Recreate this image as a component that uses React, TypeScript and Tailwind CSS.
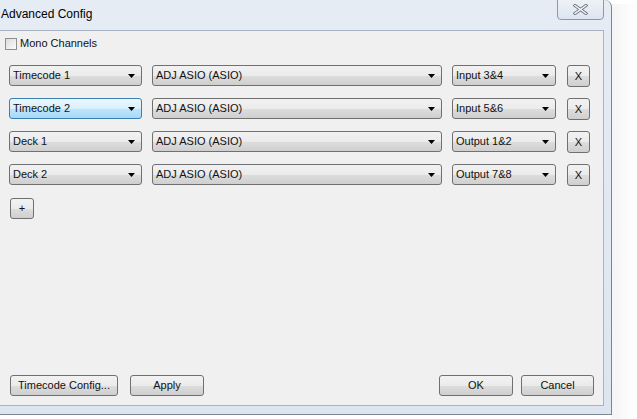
import React from "react";

const font = { fontFamily: '"Liberation Sans", Arial, sans-serif' };

function Arrow() {
  return (
    <svg width="7" height="4" viewBox="0 0 7 4" className="shrink-0">
      <path d="M0 0 H7 L3.5 4 Z" fill="#000" />
    </svg>
  );
}

function Combo({ label, w, hot }: { label: string; w: string; hot?: boolean }) {
  return (
    <div
      className={`${w} h-[21px] shrink-0 rounded-[3px] border flex items-center pl-[3px] pr-[6px] ${
        hot
          ? "border-[#3c7fb1] bg-[linear-gradient(#eaf6fd_0%,#d9f0fc_50%,#bee6fd_51%,#a7d9f5_100%)]"
          : "border-[#707070] bg-[linear-gradient(#f2f2f2_0%,#ebebeb_50%,#dddddd_51%,#cfcfcf_100%)]"
      }`}
    >
      <span className="flex-1 text-[11px] text-[#111] leading-none">{label}</span>
      <Arrow />
    </div>
  );
}

function Btn({ label, w, h = "h-[21px]" }: { label: string; w: string; h?: string }) {
  return (
    <div
      className={`${w} ${h} shrink-0 rounded-[3px] border border-[#707070] bg-[linear-gradient(#f2f2f2_0%,#ebebeb_50%,#dddddd_51%,#cfcfcf_100%)] flex items-center justify-center text-[11px] text-[#111] leading-none`}
    >
      {label}
    </div>
  );
}

const rows = [
  { a: "Timecode 1", b: "Input 3&4" },
  { a: "Timecode 2", b: "Input 5&6", hot: true },
  { a: "Deck 1", b: "Output 1&2" },
  { a: "Deck 2", b: "Output 7&8" },
];

export default function App() {
  return (
    <div className="w-[637px] h-[419px] bg-white relative overflow-hidden" style={font}>
      <div className="absolute right-0 top-[4px] w-[26px] h-[415px] bg-[linear-gradient(90deg,#f4f4f4,#ffffff)]" />
      <div className="w-[612px] h-[415px] flex flex-col bg-[linear-gradient(#e6ecf4,#dce5f0)] rounded-tr-[7px] border-r border-b border-[#7d8592] relative">
        {/* Title bar */}
        <div className="h-[30px] shrink-0 flex items-start relative">
          <span className="text-[12px] text-black mt-[7px] ml-[1px] leading-[14px]">Advanced Config</span>
          <div className="absolute left-[557px] top-[-1px] w-[47px] h-[21px] rounded-b-[4px] border border-[#8e99a8] bg-[linear-gradient(#eef2f7,#dde5ef)] flex items-center justify-center">
            <svg width="15" height="11" viewBox="0 0 15 11">
              <path d="M2 1.5 L13 9.5 M13 1.5 L2 9.5" stroke="#6b7480" strokeWidth="3.2" strokeLinecap="square" />
              <path d="M2 1.5 L13 9.5 M13 1.5 L2 9.5" stroke="#f4f6f9" strokeWidth="1.4" strokeLinecap="square" />
            </svg>
          </div>
        </div>
        {/* Client area */}
        <div className="w-[604px] h-[376px] bg-[#f0f0f0] border-r border-b border-t border-[#a9b4c2] flex flex-col">
          <div className="flex items-center h-[13px] mt-[6px] ml-[5px] gap-[3px]">
            <div className="w-[12px] h-[12px] border border-[#8e8f8f] bg-[linear-gradient(135deg,#dcdcdc,#fbfbfb)]" />
            <span className="text-[11px] text-[#111] leading-none">Mono Channels</span>
          </div>
          <div className="flex flex-col gap-[12px] mt-[15px] ml-[9px]">
            {rows.map((r) => (
              <div key={r.a} className="flex items-start h-[21px]">
                <Combo label={r.a} w="w-[133px]" hot={r.hot} />
                <div className="w-[10px]" />
                <Combo label="ADJ ASIO (ASIO)" w="w-[290px]" />
                <div className="w-[10px]" />
                <Combo label={r.b} w="w-[104px]" />
                <div className="w-[11px]" />
                <Btn label="X" w="w-[23px]" h="h-[22px]" />
              </div>
            ))}
          </div>
          <div className="ml-[10px] mt-[13px]">
            <Btn label="+" w="w-[24px]" />
          </div>
          <div className="flex-1" />
          <div className="flex items-center h-[21px] mb-[9px] pl-[10px]">
            <Btn label="Timecode Config..." w="w-[108px]" />
            <div className="w-[12px]" />
            <Btn label="Apply" w="w-[74px]" />
            <div className="flex-1" />
            <Btn label="OK" w="w-[74px]" />
            <div className="w-[8px]" />
            <Btn label="Cancel" w="w-[73px]" />
            <div className="w-[9px]" />
          </div>
        </div>
      </div>
    </div>
  );
}
